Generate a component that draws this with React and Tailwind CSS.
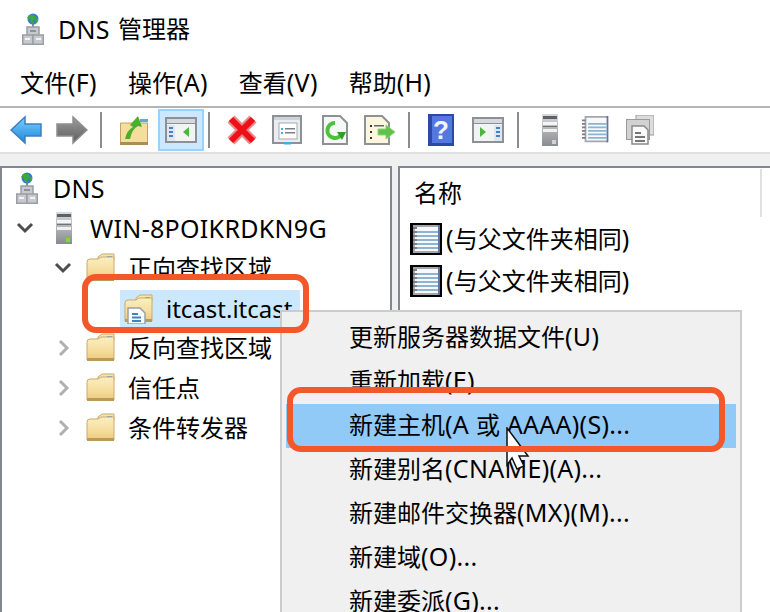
import React from "react";

function Mixed({ text }) {
  const parts = text.split(/([\u4e00-\u9fff]+)/).filter(Boolean);
  return (
    <span className="whitespace-pre">
      {parts.map((p, i) =>
        /[\u4e00-\u9fff]/.test(p) ? (
          <span key={i}>{p}</span>
        ) : (
          <span key={i} className="text-[25px] tracking-[0.3px]">{p}</span>
        )
      )}
    </span>
  );
}

function Globe() {
  return (
    <svg width="22" height="32" viewBox="0 0 22 32" className="shrink-0">
      <rect x="10" y="10" width="2" height="5" fill="#8a8f96" />
      <circle cx="11" cy="6" r="5.5" fill="#2f7fc8" />
      <path d="M7 2h5l2 3-3 3 1 3-3-1-1-4-3-1z" fill="#3fa83c" />
      <path d="M13 6l3-1v3l-2 2z" fill="#3fa83c" />
      <rect x="5" y="14" width="12" height="9" fill="#c6c9cd" stroke="#9a9ea3" strokeWidth="1.5" />
      <rect x="8" y="17" width="6" height="2" fill="#8f9398" />
      <rect x="0.75" y="22" width="10.25" height="9.25" fill="#c6c9cd" stroke="#9a9ea3" strokeWidth="1.5" />
      <rect x="11" y="22" width="10.25" height="9.25" fill="#c6c9cd" stroke="#9a9ea3" strokeWidth="1.5" />
      <rect x="3" y="25" width="5" height="2" fill="#f2f3f4" />
      <rect x="14" y="25" width="5" height="2" fill="#f2f3f4" />
    </svg>
  );
}

function Folder({ doc = false }) {
  return (
    <svg width="30" height="30" viewBox="0 0 30 30" className="shrink-0">
      <defs>
        <linearGradient id="fold" x1="0" y1="0" x2="0" y2="1">
          <stop offset="0" stopColor="#fbeec4" />
          <stop offset="0.6" stopColor="#f6dd9b" />
          <stop offset="1" stopColor="#eccb7c" />
        </linearGradient>
      </defs>
      <path d="M12 4l4-3h12v6H12z" fill="#f5e5b5" stroke="#c9ab6b" />
      <rect x="21" y="3" width="5" height="2" fill="#5ea8e0" />
      <path d="M1 9q0-3 3-3h8l3-2h13v23H1z" fill="url(#fold)" stroke="#c9ab6b" />
      <rect x="1" y="25" width="27" height="3" fill="#b89a5c" />
      {doc && (
        <g>
          <path d="M4 14h12l5 5v11H4z" fill="#fbfcfd" stroke="#9aa0a6" strokeWidth="1.5" />
          <rect x="8" y="19" width="6" height="2" fill="#3f83c4" />
          <rect x="8" y="22.5" width="9" height="2" fill="#3f83c4" />
          <rect x="8" y="26" width="9" height="2" fill="#3f83c4" />
        </g>
      )}
    </svg>
  );
}

function Server({ w = 16, h = 32, led = true }) {
  return (
    <svg width={w} height={h} viewBox="0 0 16 32" className="shrink-0">
      <defs>
        <linearGradient id="srv" x1="0" y1="0" x2="0" y2="1">
          <stop offset="0" stopColor="#d8dadc" />
          <stop offset="1" stopColor="#888c90" />
        </linearGradient>
      </defs>
      <rect x="0" y="0" width="16" height="32" fill="url(#srv)" />
      <rect x="1" y="2" width="14" height="3" fill="#5e6266" />
      <rect x="1" y="8" width="14" height="3" fill="#f4f5f5" />
      <rect x="1" y="12" width="14" height="1" fill="#6f7377" />
      <rect x="1" y="15" width="14" height="3" fill="#f0f1f1" />
      <rect x="10" y="26" width="4" height="4" fill={led ? "#7fdc2c" : "#d0d2d4"} />
    </svg>
  );
}

function Notebook({ w = 32, h = 32, dark = false }) {
  return (
    <svg width={w} height={h} viewBox="0 0 32 32" className="shrink-0">
      {dark && <rect x="0" y="0" width="32" height="32" fill="#000" />}
      <rect x="3" y={dark ? 2 : 0} width="27" height={dark ? 28 : 30} fill="#a3a7ad" />
      <rect x="28" y={dark ? 2 : 0} width="2" height={dark ? 28 : 30} fill="#5f76a8" />
      <rect x="5" y={dark ? 4 : 2} width="23" height={dark ? 24 : 26} fill="#f7f9fb" />
      {[8, 12, 16, 20, 24].map((y) => (
        <rect key={y} x="7" y={y} width="21" height="2" fill="#8db4d0" />
      ))}
      {[4, 8, 12, 16, 20, 24].map((y) => (
        <rect key={y} x={dark ? 3 : 0} y={y} width="4" height="2" fill="#7b7e82" />
      ))}
    </svg>
  );
}

function Chevron({ open, dark }) {
  const color = dark ? "#4d4d4d" : "#b0b0b0";
  return open ? (
    <svg width="18" height="12" viewBox="0 0 18 12" className="shrink-0">
      <path d="M2 2l7 7 7-7" fill="none" stroke={color} strokeWidth="3" />
    </svg>
  ) : (
    <svg width="12" height="18" viewBox="0 0 12 18" className="shrink-0">
      <path d="M2 2l7 7-7 7" fill="none" stroke={color} strokeWidth="3" />
    </svg>
  );
}

function Sep({ cls }) {
  return <div className={"h-9 w-[2px] bg-[#8c8c8c] shrink-0 " + cls} />;
}

function WindowIcon({ flip }) {
  return (
    <svg width="32" height="26" viewBox="0 0 32 26" className="shrink-0">
      <rect x="0" y="0" width="32" height="26" fill="#8d9196" />
      <rect x="2" y="2" width="28" height="4" fill="#d5d8dc" />
      <rect x="2" y="7" width="28" height="17" fill="#f2f3f3" />
      {flip ? (
        <g>
          <rect x="22" y="8" width="8" height="16" fill="#dfe6ef" />
          <rect x="24" y="10" width="4" height="2" fill="#3f83c4" />
          <rect x="24" y="14" width="4" height="2" fill="#3f83c4" />
          <rect x="24" y="18" width="4" height="2" fill="#3f83c4" />
          <path d="M8 10l6 5-6 5z" fill="#4cb53f" />
        </g>
      ) : (
        <g>
          <rect x="2" y="8" width="8" height="16" fill="#dfe6ef" />
          <rect x="4" y="10" width="4" height="2" fill="#3f83c4" />
          <rect x="4" y="14" width="4" height="2" fill="#3f83c4" />
          <rect x="4" y="18" width="4" height="2" fill="#3f83c4" />
          <path d="M24 10l-6 5 6 5z" fill="#4cb53f" />
        </g>
      )}
    </svg>
  );
}

function Toolbar() {
  return (
    <div className="flex items-center h-[46px] pl-[10px] bg-white border-t-2 border-[#b5b5b5]">
      <svg width="32" height="30" viewBox="0 0 32 30" className="shrink-0">
        <defs>
          <linearGradient id="ab" x1="0" y1="0" x2="0" y2="1">
            <stop offset="0" stopColor="#7fd0fb" />
            <stop offset="1" stopColor="#1c86dc" />
          </linearGradient>
          <linearGradient id="ag" x1="0" y1="0" x2="0" y2="1">
            <stop offset="0" stopColor="#9c9c9c" />
            <stop offset="1" stopColor="#5e5e5e" />
          </linearGradient>
        </defs>
        <path d="M1 15L15 2v7h16v12H15v7z" fill="url(#ab)" stroke="#3d7fc0" strokeWidth="1.5" />
      </svg>
      <svg width="32" height="30" viewBox="0 0 32 30" className="ml-[14px] shrink-0">
        <path d="M31 15L17 2v7H1v12h16v7z" fill="url(#ag)" stroke="#8e8e8e" strokeWidth="1.5" />
      </svg>
      <Sep cls="ml-[12px]" />
      <svg width="30" height="30" viewBox="0 0 30 30" className="ml-[18px] shrink-0">
        <path d="M0.5 8h27v21h-27z" fill="#f5dd9c" stroke="#bfa264" />
        <rect x="0" y="27" width="28" height="3" fill="#a98e58" />
        <rect x="20" y="4" width="8" height="3" fill="#5ea8e0" />
        <path d="M5 24q2-9 8-12l-3-2 8-9 4 11-4-1q-6 3-8 13z" fill="#4cae2f" />
      </svg>
      <div className="ml-[8px] w-[46px] h-[42px] shrink-0 bg-[#cce8ff] border-2 border-[#99d1ff] flex items-center justify-center">
        <WindowIcon />
      </div>
      <Sep cls="ml-[4px]" />
      <svg width="32" height="32" viewBox="0 0 32 32" className="ml-[16px] shrink-0">
        <path d="M5 5L27 27M27 5L5 27" fill="none" stroke="#e58a8c" strokeWidth="10" />
        <path d="M5 5L27 27M27 5L5 27" fill="none" stroke="#ef0f16" strokeWidth="6" />
      </svg>
      <svg width="30" height="30" viewBox="0 0 30 30" className="ml-[14px] shrink-0">
        <rect x="1" y="1" width="28" height="27" fill="#e9ecf1" stroke="#8d9196" strokeWidth="2" />
        <rect x="2" y="2" width="26" height="3" fill="#cfd3d8" />
        <rect x="7" y="8" width="18" height="16" fill="#fff" stroke="#a6abb1" />
        <rect x="9" y="13" width="2" height="2" fill="#3db0e8" />
        <rect x="13" y="13" width="10" height="1.5" fill="#7a8088" />
        <rect x="13" y="17" width="10" height="1.5" fill="#7a8088" />
        <rect x="9" y="17" width="2" height="2" fill="#3db0e8" />
        <rect x="12" y="27" width="7" height="2.5" fill="#36b4ef" />
      </svg>
      <svg width="26" height="30" viewBox="0 0 26 30" className="ml-[20px] shrink-0">
        <path d="M1 1h17l7 7v21H1z" fill="#f6f7f7" stroke="#8d9196" strokeWidth="2" />
        <path d="M13 8a7.5 7.5 0 1 0 7 10" fill="none" stroke="#4cc23a" strokeWidth="4" />
        <path d="M15 17h9l-4 8z" fill="#2f9e2a" />
      </svg>
      <svg width="32" height="30" viewBox="0 0 32 30" className="ml-[16px] shrink-0">
        <path d="M1 1h17l7 7v21H1z" fill="#fbf6dd" stroke="#8d9196" strokeWidth="2" />
        <rect x="6" y="10" width="2" height="2" fill="#333" />
        <rect x="10" y="10" width="10" height="1.5" fill="#666" />
        <rect x="6" y="16" width="2" height="2" fill="#333" />
        <rect x="6" y="22" width="2" height="2" fill="#333" />
        <path d="M14 14h8v-4l9 7-9 7v-4h-8z" fill="#5ec24a" stroke="#88d678" />
      </svg>
      <Sep cls="ml-[12px]" />
      <svg width="26" height="32" viewBox="0 0 26 32" className="ml-[18px] shrink-0">
        <rect width="26" height="32" fill="#2a49a8" />
        <rect x="4" y="2" width="20" height="27" fill="#5578e0" />
        <text x="13" y="25" textAnchor="middle" fontSize="26" fontWeight="700" fill="#f0f3fb" fontFamily="Liberation Sans, sans-serif">?</text>
      </svg>
      <div className="ml-[18px] shrink-0 flex items-center">
        <WindowIcon flip />
      </div>
      <Sep cls="ml-[13px]" />
      <div className="ml-[23px] shrink-0">
        <Server led={false} />
      </div>
      <div className="ml-[24px] shrink-0">
        <Notebook w={28} h={30} />
      </div>
      <svg width="28" height="30" viewBox="0 0 28 30" className="ml-[16px] shrink-0">
        <path d="M10 0h18v20H22V6H10z" fill="#dcdcdc" stroke="#9a9a9a" />
        <rect x="0.5" y="4.5" width="23" height="20" fill="#d2d2d2" stroke="#9a9a9a" />
        <path d="M6 11h12l4 4v14H6z" fill="#fafafa" stroke="#8a8a8a" strokeWidth="1.5" />
        <rect x="9" y="17" width="6" height="2" fill="#777" />
        <rect x="9" y="21" width="10" height="2" fill="#777" />
        <rect x="9" y="25" width="10" height="2" fill="#777" />
      </svg>
    </div>
  );
}

function TreeRow({ pad, children }) {
  return (
    <div className={"flex items-center h-10 whitespace-nowrap " + pad}>{children}</div>
  );
}

const menuItems = [
  "更新服务器数据文件(U)",
  "重新加载(E)",
  "新建主机(A 或 AAAA)(S)...",
  "新建别名(CNAME)(A)...",
  "新建邮件交换器(MX)(M)...",
  "新建域(O)...",
  "新建委派(G)...",
];

export default function App() {
  return (
    <div className="relative w-[770px] h-[612px] overflow-hidden bg-[#f0f0f0] text-black text-[24px] leading-none font-['Noto_Sans','Noto_Sans_CJK_SC',sans-serif]">
      <div className="bg-white">
        <div className="flex items-center h-[58px] pl-[22px]">
          <Globe />
          <span className="ml-[14px] text-[25px] tracking-[0.3px]">DNS</span>
          <span className="ml-[8px]">管理器</span>
        </div>
        <div className="flex items-center h-[48px] pl-[20px] gap-[31px]">
          <Mixed text="文件(F)" />
          <Mixed text="操作(A)" />
          <Mixed text="查看(V)" />
          <Mixed text="帮助(H)" />
        </div>
        <Toolbar />
        <div className="h-[2px] bg-[#e0e0e0]" />
      </div>

      <div className="flex mt-[12px] h-[446px] gap-[6px]">
        <div className="w-[392px] bg-white border-l-2 border-t-2 border-r-2 border-[#828790] shrink-0">
          <TreeRow pad="pl-[14px]">
            <Globe />
            <span className="ml-[15px] text-[25px] tracking-[0.3px]">DNS</span>
          </TreeRow>
          <TreeRow pad="pl-[14px]">
            <Chevron open dark />
            <div className="ml-[22px]"><Server /></div>
            <span className="ml-[18px] text-[25px] tracking-[0.3px]">WIN-8POIKRDKN9G</span>
          </TreeRow>
          <TreeRow pad="pl-[52px]">
            <Chevron open dark />
            <div className="ml-[14px]"><Folder /></div>
            <span className="ml-[12px]">正向查找区域</span>
          </TreeRow>
          <TreeRow pad="pl-[118px]">
            <div className="self-start mt-[2px] flex items-center h-[37px] w-[180px] pl-1 bg-[#cce8ff] overflow-hidden">
              <Folder doc />
              <span className="ml-[12px]">itcast.itcast</span>
            </div>
          </TreeRow>
          {["反向查找区域", "信任点", "条件转发器"].map((t) => (
            <TreeRow key={t} pad="pl-[56px]">
              <Chevron />
              <div className="ml-[16px]"><Folder /></div>
              <span className="ml-[12px]">{t}</span>
            </TreeRow>
          ))}
        </div>
        <div className="flex-1 bg-white border-l-2 border-t-2 border-[#828790] pl-[10px] pr-2">
          <div className="flex items-center justify-between h-[50px] pl-[4px]">
            <span>名称</span>
            <div className="w-[2px] h-[48px] bg-[#e0e0e0]" />
          </div>
          {[0, 1].map((i) => (
            <div key={i} className="flex items-center h-[42px]">
              <Notebook dark />
              <span className="ml-[4px] pb-[2px]">
                <Mixed text="(与父文件夹相同)" />
              </span>
            </div>
          ))}
        </div>
      </div>

      {/* context menu */}
      <div className="absolute left-[280px] top-[310px] w-[462px] h-[302px] bg-[#f0f0f0] border-t-2 border-l-2 border-r-2 border-[#cccccc] pt-[4px] px-1">
        {menuItems.map((t, i) => (
          <div
            key={t}
            className={"flex items-center h-[44px] pl-[63px] pb-[4px] whitespace-nowrap " + (i === 2 ? "bg-[#91c9f7]" : "")}
          >
            <Mixed text={t} />
          </div>
        ))}
      </div>

      {/* mouse cursor */}
      <svg width="26" height="44" viewBox="0 0 26 44" className="absolute left-[506px] top-[427px]">
        <path d="M1 1v37l5-7 5 11 7-3-5-10h9z" fill="#ffffff" stroke="#111111" strokeWidth="1.5" />
      </svg>

      {/* annotations */}
      <div className="absolute left-[82px] top-[274px] w-[227px] h-[59px] border-[6px] border-[#f4572a] rounded-[14px]" />
      <div className="absolute left-[287px] top-[387px] w-[438px] h-[65px] border-[6px] border-[#f4572a] rounded-[14px]" />
    </div>
  );
}
